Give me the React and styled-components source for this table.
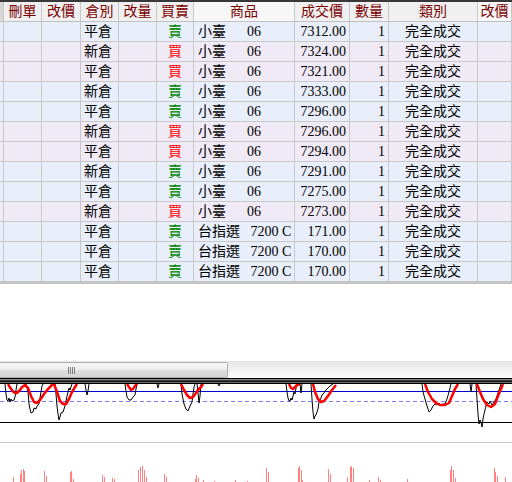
import React from "react";
import styled, { createGlobalStyle } from "styled-components";

const Global = createGlobalStyle`
  html, body { margin: 0; padding: 0; background: #ffffff; }
  body { font-family: "Liberation Serif", "Noto Sans CJK TC", serif; font-size: 14px; }
  * { box-sizing: border-box; }
`;

const COLS = "4px 38px 39px 38px 38px 37px 101px 55px 39px 89px 1fr";

const Page = styled.div`
  width: 512px;
  height: 482px;
  display: flex;
  flex-direction: column;
  overflow: hidden;
  background: #fff;
`;

const Table = styled.div`
  display: flex;
  flex-direction: column;
  border-bottom: 2px solid #c4c4c4;
`;

const HeaderRow = styled.div`
  display: grid;
  grid-template-columns: ${COLS};
  height: 22px;
  border-top: 2px solid #383838;
  border-bottom: 1px solid #c0c0c0;
  background: #f0f0f0;
`;

const HeadCell = styled.div`
  display: flex;
  align-items: center;
  justify-content: center;
  border-right: 1px solid #c8c8c8;
  color: #7a0000;
  background: ${(p) => (p.$edge ? "#d6d6d6" : p.$light ? "#f7f7f7" : "#f0f0f0")};
  line-height: 1;
  white-space: nowrap;
  overflow: hidden;
`;

const Row = styled.div`
  display: grid;
  grid-template-columns: ${COLS};
  height: 20px;
  border-bottom: 1px solid #c8c8c8;
  background: ${(p) => (p.$buy ? "#f0eaf6" : "#e8eefa")};
`;

const Cell = styled.div`
  display: flex;
  align-items: center;
  justify-content: ${(p) => p.$align || "flex-start"};
  padding: 0 ${(p) => (p.$align === "flex-end" ? "3px" : "0")} 0 ${(p) => (p.$align === "flex-start" ? "3px" : "0")};
  border-right: 1px solid #c8c8c8;
  color: #000;
  line-height: 1;
  white-space: nowrap;
  overflow: hidden;
`;

const Side = styled.span`
  color: ${(p) => (p.$buy ? "#ff0000" : "#008800")};
`;

const ProdName = styled.span`
  display: inline-block;
  width: 50px;
  padding-left: 1px;
`;

const ProdCode = styled.span`
  display: inline-block;
`;

const Gap = styled.div`
  height: 77px;
  flex: none;
  background: #fff;
`;

const ScrollBar = styled.div`
  height: 17px;
  flex: none;
  display: flex;
  background: linear-gradient(#e4e4e4, #f4f4f4 60%, #fcfcfc);
`;

const Thumb = styled.div`
  width: 228px;
  height: 16px;
  margin-top: 1px;
  border: 1px solid #b0b0b0;
  border-left: none;
  border-radius: 0 2px 2px 0;
  background: linear-gradient(#f6f6f6, #ececec 45%, #dedede 55%, #d4d4d4);
  display: flex;
  align-items: center;
  justify-content: center;
  padding-right: 83px;
`;

const Grip = styled.div`
  width: 8px;
  height: 7px;
  background: repeating-linear-gradient(90deg, #7c7c7c 0 1px, transparent 1px 2px);
`;

const Splitter = styled.div`
  height: 6px;
  flex: none;
  background: linear-gradient(
    #000 0 1px,
    #8a8a8a 1px 2px,
    #3a3a3a 2px 3px,
    #1a1a1a 3px 4px,
    #6a6a6a 4px 5px,
    #000 5px 6px
  );
`;

const ChartPane = styled.div`
  flex: none;
  height: 98px;
  background: #fff;
`;

const rows = [
  ["平倉", false, "小臺", "06", "7312.00"],
  ["新倉", true, "小臺", "06", "7324.00"],
  ["平倉", true, "小臺", "06", "7321.00"],
  ["新倉", false, "小臺", "06", "7333.00"],
  ["平倉", false, "小臺", "06", "7296.00"],
  ["新倉", true, "小臺", "06", "7296.00"],
  ["平倉", true, "小臺", "06", "7294.00"],
  ["新倉", false, "小臺", "06", "7291.00"],
  ["平倉", false, "小臺", "06", "7275.00"],
  ["新倉", true, "小臺", "06", "7273.00"],
  ["平倉", false, "台指選", "\u00a07200 C", "171.00"],
  ["平倉", false, "台指選", "\u00a07200 C", "170.00"],
  ["平倉", false, "台指選", "\u00a07200 C", "170.00"],
];

const headers = ["", "刪單", "改價", "倉別", "改量", "買賣", "商品", "成交價", "數量", "類別", "改價"];

const redPaths = [
  "M8,0 L11,5 L14,8.5 L17,9 L20,6 L22,3 L25,1 L28,4 L31,12 L34,18 L37,19 L40,16 L44,10 L48,5 L52,1 L54,0",
  "M54,0 L57,8 L60,17 L63,20 L66,20 L69,15 L72,8 L75,3 L77,0",
  "M127,0 L129,3 L131,6 L133,5 L135,2 L137,0",
  "M181,0 L184,6 L187,11 L190,14 L193,13 L196,9 L198,6 L201,3 L203,0",
  "M289,0 L291,4 L293,5 L295,3 L297,1 L300,0",
  "M313,0 L315,8 L318,15 L321,18 L324,17 L328,12 L332,6 L336,1",
  "M425,0 L428,8 L432,15 L436,19 L440,21 L445,21 L449,19 L452,12 L455,5 L458,0",
  "M477,0 L480,8 L483,15 L487,21 L491,23 L495,20 L498,12 L501,5 L503,0",
];

const blackPaths = [
  "M5,0 L6,10 L7,16 L8,17 L9,14 L10,18 L11,15 L12,17 L14,16 L15,13 L16,6 L17,0",
  "M26,0 L28,8 L29,20 L30,25 L31,29 L33,28 L34,24 L36,25 L37,22 L39,20 L40,14 L41,8 L42,2 L43,0",
  "M55,0 L56,10 L57,22 L58,30 L59,36 L60,33 L61,29 L63,28 L64,25 L65,22 L66,17 L67,12 L68,8 L69,4 L70,6 L71,3 L72,0",
  "M85,0 L86,6 L87,11 L88,7 L89,0",
  "M125,0 L126,7 L127,13 L129,16 L131,16 L133,13 L135,11 L136,5 L137,0",
  "M157,0 L158,4 L159,0",
  "M181,0 L182,10 L184,20 L186,25 L188,27 L190,22 L192,18 L193,10 L194,3 L195,0",
  "M197,0 L198,8 L199,19 L200,12 L201,0",
  "M218,0 L219,2 L220,0",
  "M286,0 L287,8 L288,14 L289,17 L290,17 L291,14 L292,16 L293,12 L294,8 L295,10 L296,4 L297,0",
  "M300,0 L301,9 L302,0",
  "M311,0 L312,15 L313,28 L314,35 L315,32 L316,31 L318,25 L319,18 L321,14 L322,11 L324,9 L326,6 L328,4 L330,2 L333,0",
  "M422,0 L423,8 L425,15 L427,22 L429,28 L431,26 L433,22 L435,20 L437,21 L439,19 L441,21 L443,20 L445,20 L447,15 L449,8 L451,0",
  "M470,0 L471,8 L472,0",
  "M476,0 L477,15 L478,30 L479,40 L480,36 L481,38 L482,43 L483,35 L484,30 L486,22 L487,18 L489,20 L490,17 L492,21 L494,18 L496,15 L498,9 L500,3 L501,0",
];

const bars = [
  [13, 5], [20, 8], [21, 12], [23, 13], [24, 11], [44, 11], [46, 6], [70, 10], [71, 11], [73, 3],
  [102, 7], [104, 5], [112, 4], [114, 3], [138, 12], [140, 15], [142, 16], [144, 12], [146, 5],
  [164, 8], [166, 5], [195, 3], [196, 7], [198, 4], [203, 2], [214, 1], [235, 2], [247, 1],
  [266, 14], [268, 10], [298, 14], [299, 16], [301, 12], [302, 2], [328, 13], [330, 8], [347, 5],
  [350, 15], [351, 16], [353, 14], [369, 2], [378, 5], [380, 2], [407, 3], [450, 12], [451, 16],
  [453, 12], [455, 4], [494, 14], [495, 10], [497, 6], [505, 5],
];

function Chart() {
  return (
    <svg width="512" height="98" viewBox="0 0 512 98" style={{ display: "block" }}>
      <line x1="0" y1="7.5" x2="512" y2="7.5" stroke="#0000cc" strokeWidth="1" />
      <line x1="0" y1="17.5" x2="512" y2="17.5" stroke="#7f7fff" strokeWidth="1" strokeDasharray="4 3" />
      {blackPaths.map((d, i) => (
        <path key={"b" + i} d={d} fill="none" stroke="#000" strokeWidth="1" />
      ))}
      {redPaths.map((d, i) => (
        <path key={"r" + i} d={d} fill="none" stroke="#ff0000" strokeWidth="2.5" strokeLinejoin="round" />
      ))}
      <line x1="0" y1="38.5" x2="512" y2="38.5" stroke="#000" strokeWidth="1.2" />
      <line x1="0" y1="58.5" x2="512" y2="58.5" stroke="#c8c8c8" strokeWidth="1" />
      {bars.map(([x, h], i) => (
        <rect key={"v" + i} x={x} y={98 - h} width="1" height={h} fill="#ff8080" />
      ))}
    </svg>
  );
}

export default function App() {
  return (
    <Page>
      <Global />
      <Table>
        <HeaderRow>
          {headers.map((h, i) => (
            <HeadCell key={i} $edge={i === 0} $light={i === 6 || i === 10}>
              {h}
            </HeadCell>
          ))}
        </HeaderRow>
        {rows.map(([pos, buy, name, code, price], i) => (
          <Row key={i} $buy={buy}>
            <Cell />
            <Cell />
            <Cell />
            <Cell $align="flex-start">{pos}</Cell>
            <Cell />
            <Cell $align="center">
              <Side $buy={buy}>{buy ? "買" : "賣"}</Side>
            </Cell>
            <Cell $align="flex-start">
              <ProdName>{name}</ProdName>
              <ProdCode>{code}</ProdCode>
            </Cell>
            <Cell $align="flex-end">{price}</Cell>
            <Cell $align="flex-end">1</Cell>
            <Cell $align="center">完全成交</Cell>
            <Cell />
          </Row>
        ))}
      </Table>
      <Gap />
      <ScrollBar>
        <Thumb>
          <Grip />
        </Thumb>
      </ScrollBar>
      <Splitter />
      <ChartPane>
        <Chart />
      </ChartPane>
    </Page>
  );
}
